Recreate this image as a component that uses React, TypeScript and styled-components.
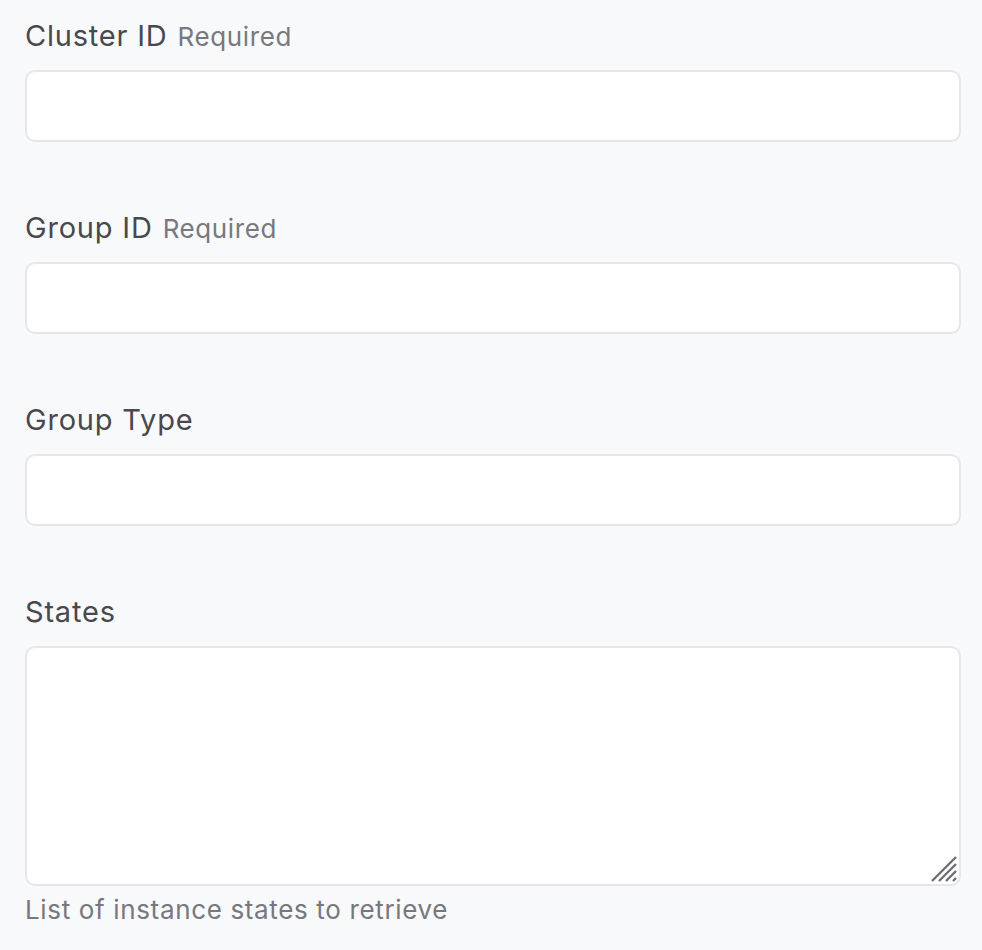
import styled, { createGlobalStyle } from 'styled-components';

const GlobalStyle = createGlobalStyle`
  html, body {
    margin: 0;
    padding: 0;
    background: #f8f9fb;
  }
  body {
    font-family: Inter, "Noto Sans", "Liberation Sans", sans-serif;
    -webkit-font-smoothing: antialiased;
  }
`;

type FieldProps = {
  label: string;
  required?: boolean;
  multiline?: boolean;
  hint?: string;
};

const Field = ({ label, required, multiline, hint }: FieldProps) => {
  return (
    <FieldWrap>
      <Label>
        {label}
        {required && <RequiredTag>Required</RequiredTag>}
      </Label>
      {multiline ? (
        <AreaWrap>
          <TextArea />
          <Grip width="26" height="26" viewBox="0 0 26 26">
            <line x1="1" y1="25" x2="25" y2="1" />
            <line x1="8" y1="25" x2="25" y2="8" />
            <line x1="15" y1="25" x2="25" y2="15" />
            <line x1="22" y1="25" x2="25" y2="22" />
          </Grip>
        </AreaWrap>
      ) : (
        <Input />
      )}
      {hint && <Hint>{hint}</Hint>}
    </FieldWrap>
  );
};

const App = () => {
  return (
    <>
      <GlobalStyle />
      <Page>
        <Field label="Cluster ID" required />
        <Field label="Group ID" required />
        <Field label="Group Type" />
        <Field
          label="States"
          multiline
          hint="List of instance states to retrieve"
        />
      </Page>
    </>
  );
};

export default App;

const Page = styled.div`
  display: flex;
  flex-direction: column;
  gap: 68px;
  padding: 18px 21px 0 25px;
  min-height: 950px;
  box-sizing: border-box;
`;

const FieldWrap = styled.div`
  display: flex;
  flex-direction: column;
`;

const Label = styled.label`
  display: flex;
  align-items: baseline;
  gap: 10px;
  height: 36px;
  line-height: 36px;
  margin-bottom: 16px;
  font-size: 29px;
  font-weight: 400;
  letter-spacing: 0.8px;
  color: #48484d;
`;

const RequiredTag = styled.span`
  font-size: 26px;
  letter-spacing: 0.6px;
  color: #78787e;
`;

const Input = styled.input`
  box-sizing: border-box;
  width: 100%;
  height: 72px;
  margin: 0;
  border: 2px solid #e7e7eb;
  border-radius: 10px;
  background: #ffffff;
  outline: none;
`;

const AreaWrap = styled.div`
  position: relative;
  display: flex;
`;

const TextArea = styled.textarea`
  box-sizing: border-box;
  width: 100%;
  height: 240px;
  margin: 0;
  border: 2px solid #e7e7eb;
  border-radius: 10px;
  background: #ffffff;
  outline: none;
  resize: none;
`;

const Grip = styled.svg`
  position: absolute;
  right: 4px;
  bottom: 4px;
  stroke: #6f6f73;
  stroke-width: 2.4;
`;

const Hint = styled.div`
  margin-top: 8px;
  font-size: 26px;
  line-height: 32px;
  letter-spacing: 0.65px;
  color: #77777c;
`;
